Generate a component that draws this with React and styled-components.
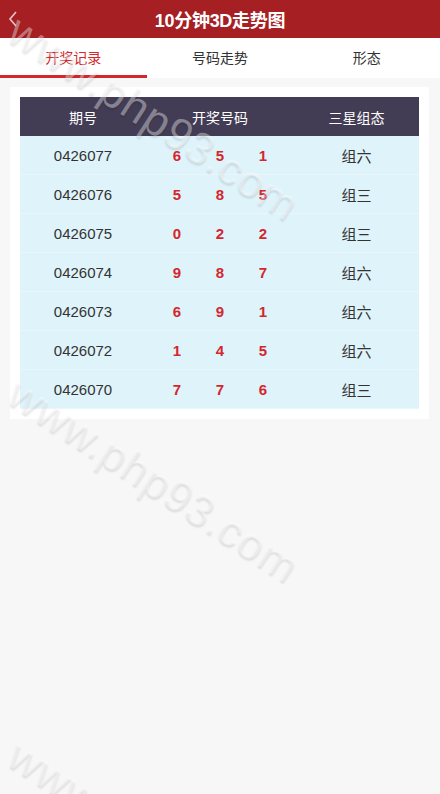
import styled, { createGlobalStyle } from "styled-components";

const GlobalStyle = createGlobalStyle`
  html, body {
    margin: 0;
    padding: 0;
    background: #f7f7f7;
  }
  body {
    font-family: "Liberation Sans", Arial, "Noto Sans CJK SC", sans-serif;
    color: #333;
  }
`;

const Page = styled.div`
  position: relative;
  width: 440px;
  min-height: 794px;
  overflow: hidden;
  background: #f7f7f7;
`;

const TopBar = styled.header`
  height: 38px;
  background: #a61f23;
  display: flex;
  align-items: center;
  justify-content: center;
  position: relative;
`;

const Back = styled.span`
  position: absolute;
  left: 6px;
  top: 9px;
  width: 16px;
  height: 20px;
  display: flex;
`;

const Title = styled.h1`
  margin: 0;
  font-size: 18px;
  font-weight: bold;
  color: #fff;
  letter-spacing: -0.3px;
`;

const Tabs = styled.nav`
  display: grid;
  grid-template-columns: repeat(3, 1fr);
  height: 40px;
  background: #fff;
`;

const Tab = styled.div`
  display: flex;
  align-items: center;
  justify-content: center;
  font-size: 14px;
  color: ${(p) => (p.$active ? "#d3272c" : "#333")};
  border-bottom: 3px solid ${(p) => (p.$active ? "#d3272c" : "transparent")};
  padding-top: 1px;
`;

const Card = styled.section`
  margin: 9px 11px 0 10px;
  background: #fff;
  padding: 10px;
`;

const Row = styled.div`
  display: grid;
  grid-template-columns: 126px 148px 1fr;
  height: 39px;
  align-items: center;
  text-align: center;
  background: ${(p) => (p.$head ? "#433c55" : "#dff3fa")};
  color: ${(p) => (p.$head ? "#fff" : "#333")};
  font-size: ${(p) => (p.$head ? "14px" : "15px")};
  box-shadow: ${(p) => (p.$head ? "none" : "inset 0 -1px 0 #e9f7fc")};
`;

const Cell = styled.div`
  display: flex;
  justify-content: center;
`;

const Ball = styled.span`
  width: 43px;
  text-align: center;
  color: #d3272d;
  font-weight: bold;
`;

const Mark = styled.span`
  position: absolute;
  left: ${(p) => p.$x}px;
  top: ${(p) => p.$y}px;
  transform-origin: left top;
  transform: rotate(33deg);
  font-family: "Liberation Sans", Arial, sans-serif;
  font-size: 44px;
  line-height: 1;
  white-space: nowrap;
  color: rgba(255, 255, 255, 0.38);
  text-shadow: 1px 2px 2px rgba(0, 0, 0, 0.1);
  pointer-events: none;
  letter-spacing: 1px;
`;

const rows = [
  ["0426077", [6, 5, 1], "组六"],
  ["0426076", [5, 8, 5], "组三"],
  ["0426075", [0, 2, 2], "组三"],
  ["0426074", [9, 8, 7], "组六"],
  ["0426073", [6, 9, 1], "组六"],
  ["0426072", [1, 4, 5], "组六"],
  ["0426070", [7, 7, 6], "组三"],
];

export default function App() {
  return (
    <Page>
      <GlobalStyle />
      <TopBar>
        <Back>
          <svg width="16" height="20" viewBox="0 0 16 20">
            <polyline
              points="10,3 4,10 10,17"
              fill="none"
              stroke="rgba(255,255,255,0.75)"
              strokeWidth="1.6"
            />
          </svg>
        </Back>
        <Title>10分钟3D走势图</Title>
      </TopBar>
      <Tabs>
        <Tab $active>开奖记录</Tab>
        <Tab>号码走势</Tab>
        <Tab>形态</Tab>
      </Tabs>
      <Card>
        <Row $head>
          <Cell>期号</Cell>
          <Cell>开奖号码</Cell>
          <Cell>三星组态</Cell>
        </Row>
        {rows.map(([issue, nums, type]) => (
          <Row key={issue}>
            <Cell>{issue}</Cell>
            <Cell>
              {nums.map((n, i) => (
                <Ball key={i}>{n}</Ball>
              ))}
            </Cell>
            <Cell>{type}</Cell>
          </Row>
        ))}
      </Card>
      <Mark $x={25} $y={8}>www.php93.com</Mark>
      <Mark $x={25} $y={370}>www.php93.com</Mark>
      <Mark $x={25} $y={732}>www.php93.com</Mark>
    </Page>
  );
}
